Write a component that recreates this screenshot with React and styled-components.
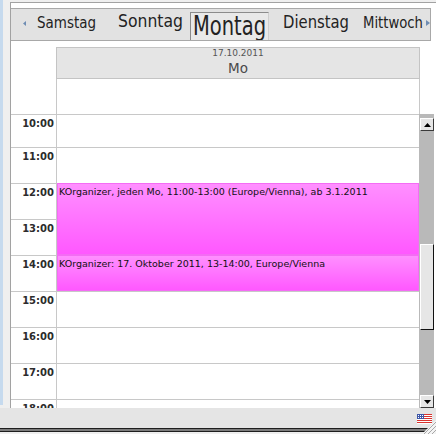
import React from "react";
import styled, { createGlobalStyle } from "styled-components";

const GlobalStyle = createGlobalStyle`
  html, body {
    margin: 0;
    padding: 0;
    background: #efefef;
  }
  body {
    font-family: "DejaVu Sans", "Noto Sans", sans-serif;
  }
`;

const days = [
  { name: "Samstag", size: 16.5, squeeze: 0.816, width: 59, lead: 11, top: 4 },
  { name: "Sonntag", size: 18, squeeze: 0.869, width: 65, lead: 22, top: 3 },
  { name: "Montag", size: 26, squeeze: 0.749, width: 79, lead: 7, top: 3, current: true },
  { name: "Dienstag", size: 17, squeeze: 0.871, width: 66, lead: 14, top: 4 },
  { name: "Mittwoch", size: 16, squeeze: 0.826, width: 60, lead: 14, top: 4 },
];

// hour rows of the agenda, heights include the top rule
const hours = [
  { label: null, height: 35 },
  { label: "10:00", height: 33 },
  { label: "11:00", height: 36 },
  { label: "12:00", height: 36 },
  { label: "13:00", height: 36 },
  { label: "14:00", height: 36 },
  { label: "15:00", height: 36 },
  { label: "16:00", height: 36 },
  { label: "17:00", height: 36 },
  { label: "18:00", height: 36 },
];

const events = [
  {
    id: 1,
    from: "12:00",
    to: "14:00",
    title: "KOrganizer, jeden Mo, 11:00-13:00 (Europe/Vienna), ab 3.1.2011",
  },
  {
    id: 2,
    from: "14:00",
    to: "15:00",
    title: "KOrganizer: 17. Oktober 2011, 13-14:00, Europe/Vienna",
  },
];

const rowTop = (label) => {
  let y = 0;
  for (const h of hours) {
    if (h.label === label) return y;
    y += h.height;
  }
  return y;
};

const App = () => {
  return (
    <>
      <GlobalStyle />
      <Screen>
        <Body>
          <SideStrip />
          <Gutter />
          <Frame>
            <TopGap />
            <TabBar>
              <NavArrow $lead={12} $top={12}>
                <svg width="3" height="5" viewBox="0 0 3 5">
                  <polygon points="3,0 0,2.5 3,5" fill="#6f8db3" />
                </svg>
              </NavArrow>
              {days.map((d) =>
                d.current ? (
                  <CurrentTab key={d.name} $lead={d.lead} $width={d.width} $top={d.top}>
                    <TabText $size={d.size} $squeeze={d.squeeze}>
                      {d.name}
                    </TabText>
                  </CurrentTab>
                ) : (
                  <Tab key={d.name} $lead={d.lead} $width={d.width} $top={d.top}>
                    <TabText $size={d.size} $squeeze={d.squeeze}>
                      {d.name}
                    </TabText>
                  </Tab>
                )
              )}
              <NavArrow $lead={3} $top={11}>
                <svg width="4" height="6" viewBox="0 0 4 6">
                  <polygon points="0,0 4,3 0,6" fill="#6f8db3" />
                </svg>
              </NavArrow>
            </TabBar>

            <DateHeader>
              <DateBox>
                <DateLine>17.10.2011</DateLine>
                <DayShort>Mo</DayShort>
              </DateBox>
            </DateHeader>

            <Schedule>
              <TimeColumn>
                {hours.map((h, i) => (
                  <HourRow key={i} $height={h.height} $first={i === 0}>
                    {h.label && <TimeLabel>{h.label}</TimeLabel>}
                  </HourRow>
                ))}
              </TimeColumn>

              <DayColumn>
                {hours.map((h, i) => (
                  <HourRow key={i} $height={h.height} $first={i === 0} />
                ))}
                {events.map((e) => {
                  const top = rowTop(e.from);
                  return (
                    <Event
                      key={e.id}
                      style={{ top, height: rowTop(e.to) - top }}
                    >
                      {e.title}
                    </Event>
                  );
                })}
              </DayColumn>

              <ScrollColumn>
                <ScrollCap />
                <ScrollTrack>
                  <ArrowButton>
                    <svg width="7" height="4" viewBox="0 0 7 4">
                      <polygon points="0,4 3.5,0 7,4" fill="#000" />
                    </svg>
                  </ArrowButton>
                  <Thumb />
                  <ArrowButton $end>
                    <svg width="7" height="4" viewBox="0 0 7 4">
                      <polygon points="0,0 7,0 3.5,4" fill="#000" />
                    </svg>
                  </ArrowButton>
                </ScrollTrack>
              </ScrollColumn>
            </Schedule>
          </Frame>
        </Body>

        <StatusBar>
          <svg width="15" height="10" viewBox="0 0 15 10">
            <rect width="15" height="10" fill="#fff" />
            {[0, 2, 4, 6, 8].map((y) => (
              <rect key={y} x="0" y={y} width="15" height="1" fill="#d8332e" />
            ))}
            <rect width="7" height="5" fill="#3d56a8" />
            {[1, 3, 5].map((x) =>
              [1, 3].map((y) => (
                <rect key={`${x}-${y}`} x={x} y={y} width="1" height="1" fill="#fff" />
              ))
            )}
          </svg>
        </StatusBar>
        <BottomRule />
        <Grip>
          <svg width="14" height="14" viewBox="0 0 14 14">
            <polygon points="14,0 14,14 0,14" fill="#f4f4f4" />
            <line x1="14" y1="2" x2="2" y2="14" stroke="#a8a8a8" />
            <line x1="14" y1="6" x2="6" y2="14" stroke="#a8a8a8" />
            <line x1="14" y1="10" x2="10" y2="14" stroke="#a8a8a8" />
          </svg>
        </Grip>
      </Screen>
    </>
  );
};

const Screen = styled.div`
  position: relative;
  width: 436px;
  height: 434px;
  display: flex;
  flex-direction: column;
  background: #efefef;
  overflow: hidden;
`;

const Body = styled.div`
  display: flex;
  height: 408px;
`;

const SideStrip = styled.div`
  width: 3px;
  height: 405px;
  background: #c6daee;
`;

const Gutter = styled.div`
  width: 7px;
`;

const Frame = styled.div`
  flex: 1;
  display: flex;
  flex-direction: column;
  margin-top: 2px;
  border-top: 1px solid #a2a2a2;
  border-left: 1px solid #a2a2a2;
  background: #fff;
  min-width: 0;
`;

const TopGap = styled.div`
  height: 5px;
`;

const TabBar = styled.div`
  box-sizing: border-box;
  display: flex;
  align-items: flex-start;
  height: 33px;
  margin-right: 5px;
  background: #e2e2e2;
  border: 1px solid #a8a8a8;
  border-left: none;
`;

const NavArrow = styled.div`
  display: flex;
  margin-left: ${(p) => p.$lead}px;
  margin-top: ${(p) => p.$top}px;
`;

const Tab = styled.div`
  flex: none;
  width: ${(p) => p.$width}px;
  margin-left: ${(p) => p.$lead}px;
  margin-top: ${(p) => p.$top}px;
  white-space: nowrap;
  color: #232323;
`;

const CurrentTab = styled(Tab)`
  box-sizing: border-box;
  height: 28px;
  padding-left: 2px;
  background: #e9e9e9;
  border-top: 1px solid #8c8c8c;
  border-left: 1px solid #8c8c8c;
  border-right: 1px solid #cfcfcf;
  overflow: hidden;
`;

const TabText = styled.span`
  display: inline-block;
  font-size: ${(p) => p.$size}px;
  line-height: 1;
  transform: scaleX(${(p) => p.$squeeze});
  transform-origin: left top;
`;

const DateHeader = styled.div`
  display: flex;
  height: 38px;
  box-sizing: border-box;
  padding-top: 6px;
  padding-left: 45px;
`;

const DateBox = styled.div`
  box-sizing: border-box;
  width: 364px;
  height: 32px;
  display: flex;
  flex-direction: column;
  align-items: center;
  background: #e5e5e5;
  border: 1px solid #c4c4c4;
  color: #555;
`;

const DateLine = styled.div`
  margin-top: 1px;
  font-size: 9px;
  line-height: 1;
`;

const DayShort = styled.div`
  margin-top: 4px;
  font-size: 13.5px;
  line-height: 1;
  color: #4a4a4a;
`;

const Schedule = styled.div`
  flex: 1;
  display: flex;
  overflow: hidden;
`;

const TimeColumn = styled.div`
  flex: none;
  width: 46px;
  box-sizing: border-box;
  border-right: 1px solid #c8c8c8;
`;

const HourRow = styled.div`
  box-sizing: border-box;
  height: ${(p) => p.$height}px;
  border-top: ${(p) => (p.$first ? "none" : "1px solid #c8c8c8")};
`;

const TimeLabel = styled.div`
  padding: 3px 2px 0 0;
  text-align: right;
  font-size: 10px;
  line-height: 12px;
  font-weight: bold;
  color: #2c2c2c;
`;

const DayColumn = styled.div`
  position: relative;
  flex: none;
  width: 362px;
`;

const Event = styled.div`
  position: absolute;
  left: 0;
  right: 0;
  box-sizing: border-box;
  padding: 2px 1px 0;
  border: 1px solid #f46cf4;
  background: linear-gradient(to bottom, #ff8fff, #ff58ff);
  font-size: 9.5px;
  line-height: 11px;
  color: #111;
  white-space: nowrap;
  overflow: hidden;
`;

const ScrollColumn = styled.div`
  flex: none;
  width: 15px;
  display: flex;
  flex-direction: column;
`;

const ScrollCap = styled.div`
  height: 35px;
  border-left: 1px solid #c8c8c8;
`;

const ScrollTrack = styled.div`
  flex: 1;
  display: flex;
  flex-direction: column;
  box-sizing: border-box;
  padding: 4px 0 0 1px;
  background: #b9b9b9;
`;

const ArrowButton = styled.div`
  box-sizing: border-box;
  height: 13px;
  margin-top: ${(p) => (p.$end ? "auto" : "0")};
  display: flex;
  align-items: center;
  justify-content: center;
  background: #e6e6e6;
  border-top: 1px solid #fff;
  border-left: 1px solid #fff;
  border-right: 1px solid #3a3a3a;
  border-bottom: 1px solid #3a3a3a;
`;

const Thumb = styled.div`
  box-sizing: border-box;
  height: 86px;
  margin-top: 113px;
  background: #e6e6e6;
  border-top: 1px solid #fff;
  border-left: 1px solid #fff;
  border-right: 1px solid #111;
  border-bottom: 1px solid #111;
`;

const StatusBar = styled.div`
  height: 20px;
  box-sizing: border-box;
  display: flex;
  justify-content: flex-end;
  align-items: flex-start;
  padding: 6px 4px 0 0;
  background: #e5e5e5;
`;

const BottomRule = styled.div`
  height: 2px;
  border-top: 1px solid #1e1e1e;
  border-bottom: 1px solid #1e1e1e;
  background: #7c7c7c;
`;

const Grip = styled.div`
  position: absolute;
  right: 0;
  bottom: 0;
  display: flex;
`;

export default App;
